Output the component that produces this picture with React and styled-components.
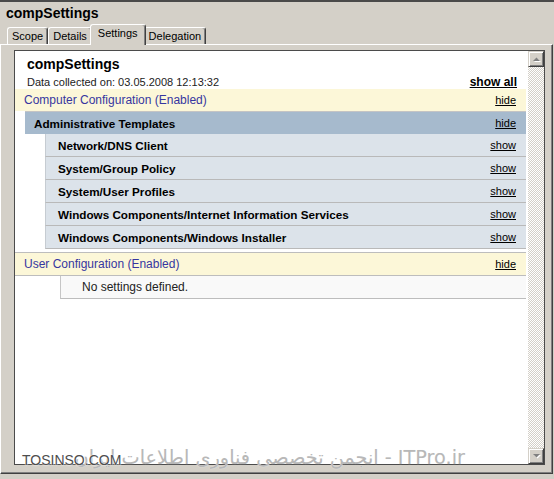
import React from "react";
import styled, { createGlobalStyle } from "styled-components";

const Global = createGlobalStyle`
  html, body { margin: 0; padding: 0; }
  body { background: #d4d0c8; }
`;

const Window = styled.div`
  position: relative;
  width: 554px;
  height: 479px;
  box-sizing: border-box;
  background: #d4d0c8;
  border-top: 2px solid #4a4a4a;
  display: flex;
  flex-direction: column;
  font-family: "Liberation Sans", Arial, sans-serif;
  color: #000;
  overflow: hidden;
`;

const Title = styled.div`
  height: 22px;
  line-height: 22px;
  padding-left: 6px;
  font-weight: bold;
  font-size: 14px;
`;

const TabStrip = styled.div`
  height: 20px;
  display: flex;
  align-items: flex-end;
  padding-left: 7px;
`;

const Tab = styled.div`
  position: relative;
  box-sizing: border-box;
  height: ${(p) => (p.$active ? 21 : 17)}px;
  margin: 0 ${(p) => (p.$active ? -2 : 0)}px ${(p) => (p.$active ? -1 : 0)}px;
  z-index: ${(p) => (p.$active ? 1 : 0)};
  padding: 2px ${(p) => (p.$active ? 7 : 4)}px 0;
  font-size: 11px;
  line-height: 13px;
  background: #d4d0c8;
  border-top: 1px solid #fff;
  border-left: 1px solid #fff;
  border-right: 1px solid #404040;
  box-shadow: inset -1px 0 #808080;
  border-radius: 3px 3px 0 0;
  white-space: nowrap;
`;

const Panel = styled.div`
  flex: 1;
  display: flex;
  min-height: 0;
  margin: 0 1px 5px 0;
  padding: 5px 7px 8px 13px;
  border-top: 1px solid #fff;
  border-left: 1px solid #fff;
  border-right: 1px solid #404040;
  border-bottom: 1px solid #404040;
  box-shadow: inset -1px -1px #808080;
`;

const ContentBox = styled.div`
  flex: 1;
  display: flex;
  min-width: 0;
  border: 1px solid #4b4b4b;
`;

const ScrollArea = styled.div`
  flex: 1;
  min-width: 0;
  background: #fff;
  overflow: hidden;
`;

const Scrollbar = styled.div`
  width: 16px;
  display: flex;
  flex-direction: column;
  justify-content: space-between;
  background-color: #d4d0c8;
  background-image: repeating-conic-gradient(#ffffff 0 25%, #d4d0c8 0 50%);
  background-size: 2px 2px;
`;

const ArrowButton = styled.div`
  width: 16px;
  height: 16px;
  box-sizing: border-box;
  background: #d4d0c8;
  border-top: 1px solid #d4d0c8;
  border-left: 1px solid #d4d0c8;
  border-right: 1px solid #404040;
  border-bottom: 1px solid #404040;
  box-shadow: inset 1px 1px #fff, inset -1px -1px #808080;
  display: flex;
  align-items: center;
  justify-content: center;
`;

const Header = styled.div`
  padding: 4px 11px 0 12px;
`;

const HeaderTitle = styled.div`
  font-size: 14px;
  font-weight: bold;
  line-height: 18px;
`;

const InfoLine = styled.div`
  display: flex;
  justify-content: space-between;
  align-items: baseline;
  margin-top: 2px;
  font-size: 11px;
  line-height: 14px;
  color: #222;
`;

const ShowAll = styled.span`
  font-size: 12px;
  font-weight: bold;
  color: #000;
  text-decoration: underline;
`;

const ToggleLink = styled.span`
  font-size: 11px;
  font-weight: normal;
  color: #000;
  text-decoration: underline;
`;

const SectionHeader = styled.div`
  height: 22px;
  display: flex;
  align-items: center;
  justify-content: space-between;
  padding: 0 10px 0 9px;
  margin: ${(p) => (p.$spaced ? "3px" : "0")} 2px 0 0;
  background: #fcf7d8;
  font-size: 12px;
  color: #3636a0;
  border-top: ${(p) => (p.$bordered ? "1px solid #bdbdbd" : "none")};
  border-bottom: ${(p) => (p.$bordered ? "1px solid #bdbdbd" : "none")};
`;

const CategoryHeader = styled.div`
  height: 22px;
  display: flex;
  align-items: center;
  justify-content: space-between;
  padding: 0 10px 0 9px;
  margin: 0 2px 0 10px;
  background: #a6bacd;
  border-top: 1px solid #c4c4c4;
  font-size: 11.7px;
  font-weight: bold;
`;

const PolicyRow = styled.div`
  height: 22px;
  display: flex;
  align-items: center;
  justify-content: space-between;
  padding: 0 10px 0 12px;
  margin: 0 2px 0 30px;
  background: #dce3ea;
  border-left: 1px solid #c6ccd2;
  border-bottom: 1px solid #b9b9b9;
  font-size: 11.7px;
  font-weight: bold;
`;

const EmptyNote = styled.div`
  height: 22px;
  display: flex;
  align-items: center;
  padding-left: 21px;
  margin: 0 2px 0 45px;
  background: #f9f9f9;
  border-left: 1px solid #c6c6c6;
  border-bottom: 1px solid #bdbdbd;
  font-size: 12px;
  color: #222;
`;

const WatermarkLatin = styled.div`
  position: absolute;
  left: 22px;
  top: 450px;
  font-family: "Liberation Sans", Arial, sans-serif;
  font-size: 14px;
  line-height: 16px;
  color: #4e4e4e;
  text-shadow: 0 0 1px #fff, 0 0 2px #fff;
  white-space: nowrap;
`;

const WatermarkFa = styled.div`
  position: absolute;
  right: 89px;
  top: 446px;
  direction: rtl;
  font-family: "DejaVu Sans", sans-serif;
  font-size: 19.3px;
  line-height: 20px;
  color: #b8b8b8;
  text-shadow: 0 0 1px #f4f4f4;
  white-space: nowrap;
`;

const Arrow = ({ up }) => (
  <svg width="9" height="6" viewBox="0 0 9 6">
    <path d={up ? "M1 5h7L4.5 1.5z" : "M1 1h7L4.5 4.5z"} fill="#fff" transform="translate(1 1)" />
    <path d={up ? "M1 5h7L4.5 1.5z" : "M1 1h7L4.5 4.5z"} fill="#808080" />
  </svg>
);

const policies = [
  "Network/DNS Client",
  "System/Group Policy",
  "System/User Profiles",
  "Windows Components/Internet Information Services",
  "Windows Components/Windows Installer",
];

const tabs = ["Scope", "Details", "Settings", "Delegation"];

export default function App() {
  return (
    <>
      <Global />
      <Window>
        <Title>compSettings</Title>
        <TabStrip>
          {tabs.map((t) => (
            <Tab key={t} $active={t === "Settings"}>
              {t}
            </Tab>
          ))}
        </TabStrip>
        <Panel>
          <ContentBox>
            <ScrollArea>
              <Header>
                <HeaderTitle>compSettings</HeaderTitle>
                <InfoLine>
                  <span>Data collected on: 03.05.2008 12:13:32</span>
                  <ShowAll>show all</ShowAll>
                </InfoLine>
              </Header>
              <SectionHeader>
                <span>Computer Configuration (Enabled)</span>
                <ToggleLink>hide</ToggleLink>
              </SectionHeader>
              <CategoryHeader>
                <span>Administrative Templates</span>
                <ToggleLink>hide</ToggleLink>
              </CategoryHeader>
              {policies.map((p) => (
                <PolicyRow key={p}>
                  <span>{p}</span>
                  <ToggleLink>show</ToggleLink>
                </PolicyRow>
              ))}
              <SectionHeader $spaced $bordered>
                <span>User Configuration (Enabled)</span>
                <ToggleLink>hide</ToggleLink>
              </SectionHeader>
              <EmptyNote>No settings defined.</EmptyNote>
            </ScrollArea>
            <Scrollbar>
              <ArrowButton>
                <Arrow up />
              </ArrowButton>
              <ArrowButton>
                <Arrow />
              </ArrowButton>
            </Scrollbar>
          </ContentBox>
        </Panel>
        <WatermarkFa>ITPro.ir - انجمن تخصصی فناوری اطلاعات ایران</WatermarkFa>
        <WatermarkLatin>TOSINSO.COM</WatermarkLatin>
      </Window>
    </>
  );
}
